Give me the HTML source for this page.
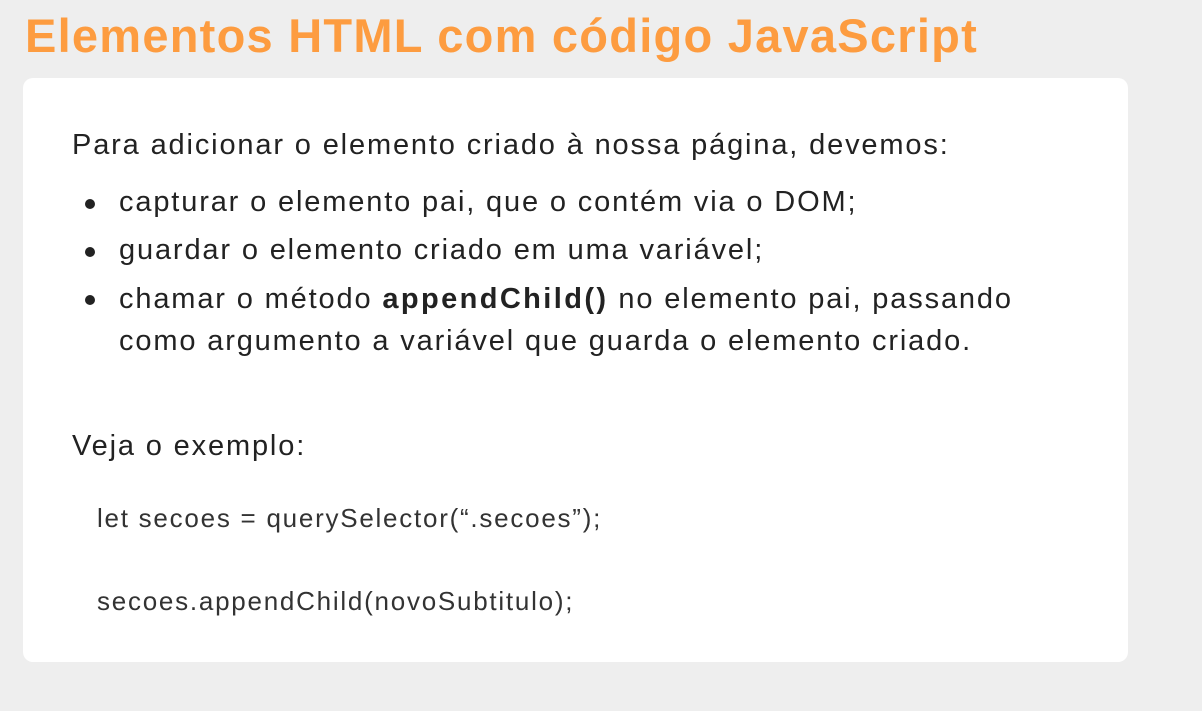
<!DOCTYPE html>
<html><head><meta charset="utf-8"><style>
body{margin:0;width:1202px;height:711px;background:#eeeeee;font-family:"Liberation Sans",sans-serif;position:relative;overflow:hidden}
.t{position:absolute;white-space:nowrap}
h1{position:absolute;left:25px;top:8px;margin:0;font-size:47px;font-weight:bold;color:#fd9c40;white-space:nowrap;letter-spacing:1.25px}
.card{position:absolute;left:23px;top:78px;width:1105px;height:584px;background:#fff;border-radius:10px}
.p{font-size:29px;color:#222;letter-spacing:1.85px}
.p b{letter-spacing:2.4px}
.dot{position:absolute;width:10px;height:10px;border-radius:50%;background:#222}
.c{font-size:26px;color:#333;letter-spacing:1.75px}
</style></head><body>
<h1>Elementos HTML com código JavaScript</h1>
<div class="card"></div>
<div class="t p" style="left:72px;top:129px">Para adicionar o elemento criado à nossa página, devemos:</div>
<div class="dot" style="left:85px;top:199px"></div>
<div class="t p" style="left:119px;top:186px">capturar o elemento pai, que o contém via o DOM;</div>
<div class="dot" style="left:85px;top:247px"></div>
<div class="t p" style="left:119px;top:234px">guardar o elemento criado em uma variável;</div>
<div class="dot" style="left:85px;top:295px"></div>
<div class="t p" style="left:119px;top:283px">chamar o método <b>appendChild()</b> no elemento pai, passando</div>
<div class="t p" style="left:119px;top:325px">como argumento a variável que guarda o elemento criado.</div>
<div class="t p" style="left:72px;top:430px">Veja o exemplo:</div>
<div class="t c" style="left:97px;top:503px">let secoes = querySelector(“.secoes”);</div>
<div class="t c" style="left:97px;top:586px">secoes.appendChild(novoSubtitulo);</div>
</body></html>
